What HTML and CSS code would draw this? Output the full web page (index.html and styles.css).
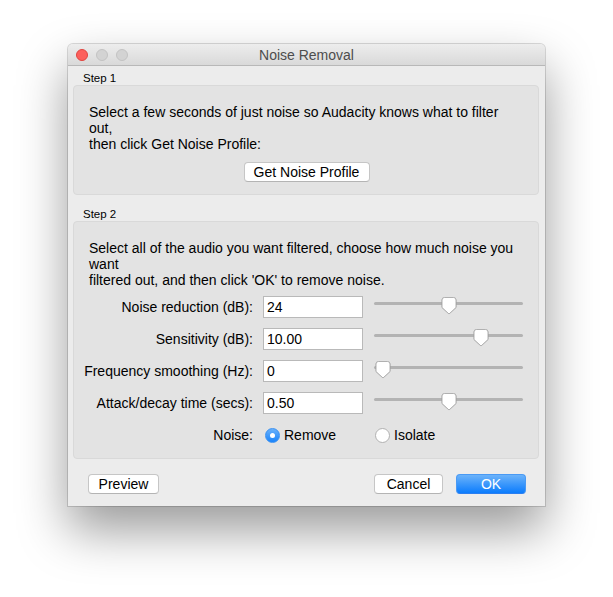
FILE: index.html
```html
<!DOCTYPE html>
<html lang="en">
  <head>
    <meta charset="UTF-8" />
    <title>Noise Removal</title>
    <link rel="stylesheet" href="styles.css">
  </head>
  <body>
    <div class="window" role="dialog" aria-label="Noise Removal">
      <div class="titlebar">
        <div class="lights">
          <span class="light close"></span>
          <span class="light"></span>
          <span class="light"></span>
        </div>
        <span class="title">Noise Removal</span>
      </div>

      <div class="content">
        <div class="step-label">Step 1</div>
        <section class="panel">
          <p class="info">
            Select a few seconds of just noise so Audacity knows what to filter<br>
            out,<br>
            then click Get Noise Profile:
          </p>
          <div class="center">
            <button class="btn profile-btn">Get Noise Profile</button>
          </div>
        </section>

        <div class="step-label step-two">Step 2</div>
        <section class="panel">
          <p class="info">
            Select all of the audio you want filtered, choose how much noise you<br>
            want<br>
            filtered out, and then click 'OK' to remove noise.
          </p>

          <div class="settings">
            <label class="field-label" for="reduction">Noise reduction (dB):</label>
            <input class="field" id="reduction" type="text" value="24">
            <div class="slider">
              <div class="track"></div>
              <div class="rail">
                <svg class="thumb" style="left: 50%" width="16" height="18" viewBox="0 0 16 18"><path d="M3.5 0.5H12.5Q15 0.5 15 3V10.5L8 17L1 10.5V3Q1 0.5 3.5 0.5Z"/></svg>
              </div>
            </div>

            <label class="field-label" for="sensitivity">Sensitivity (dB):</label>
            <input class="field" id="sensitivity" type="text" value="10.00">
            <div class="slider">
              <div class="track"></div>
              <div class="rail">
                <svg class="thumb" style="left: 75%" width="16" height="18" viewBox="0 0 16 18"><path d="M3.5 0.5H12.5Q15 0.5 15 3V10.5L8 17L1 10.5V3Q1 0.5 3.5 0.5Z"/></svg>
              </div>
            </div>

            <label class="field-label" for="smoothing">Frequency smoothing (Hz):</label>
            <input class="field" id="smoothing" type="text" value="0">
            <div class="slider">
              <div class="track"></div>
              <div class="rail">
                <svg class="thumb" style="left: 0%" width="16" height="18" viewBox="0 0 16 18"><path d="M3.5 0.5H12.5Q15 0.5 15 3V10.5L8 17L1 10.5V3Q1 0.5 3.5 0.5Z"/></svg>
              </div>
            </div>

            <label class="field-label" for="attack">Attack/decay time (secs):</label>
            <input class="field" id="attack" type="text" value="0.50">
            <div class="slider">
              <div class="track"></div>
              <div class="rail">
                <svg class="thumb" style="left: 50%" width="16" height="18" viewBox="0 0 16 18"><path d="M3.5 0.5H12.5Q15 0.5 15 3V10.5L8 17L1 10.5V3Q1 0.5 3.5 0.5Z"/></svg>
              </div>
            </div>

            <span class="field-label">Noise:</span>
            <label class="radio">
              <span class="radio-dot checked"></span>Remove
            </label>
            <label class="radio">
              <span class="radio-dot"></span>Isolate
            </label>
          </div>
        </section>

        <div class="footer">
          <button class="btn preview-btn">Preview</button>
          <div class="actions">
            <button class="btn cancel-btn">Cancel</button>
            <button class="btn default">OK</button>
          </div>
        </div>
      </div>
    </div>
  </body>
</html>
```

FILE: styles.css
```css
* {
  margin: 0;
  padding: 0;
  box-sizing: border-box;
}

html,
body {
  height: 100%;
}

body {
  background: #ffffff;
  font-family: "Liberation Sans", Arial, sans-serif;
  font-size: 14px;
  color: #000000;
  overflow: hidden;
}

.window {
  width: 477px;
  margin: 44px 0 0 68px;
  background: #ececec;
  border-radius: 5px 5px 0 0;
  box-shadow: 0 0 0 1px rgba(0, 0, 0, 0.14), 0 24px 50px rgba(0, 0, 0, 0.4);
}

/* title bar */
.titlebar {
  position: relative;
  height: 22px;
  display: flex;
  align-items: center;
  justify-content: center;
  background: linear-gradient(#ededed, #d9d9d9);
  border-bottom: 1px solid #b8b8b8;
  border-radius: 5px 5px 0 0;
}

.lights {
  position: absolute;
  left: 8px;
  top: 5px;
  display: flex;
  gap: 8px;
}

.light {
  width: 12px;
  height: 12px;
  border-radius: 50%;
  background: #d3d3d3;
  border: 1px solid #c3c3c3;
}

.light.close {
  background: #fc605c;
  border-color: #e1443f;
}

.title {
  color: #4d4d4d;
  font-size: 14px;
}

/* content */
.step-label {
  font-size: 11.5px;
  line-height: 14px;
  padding: 5px 0 0 15px;
  height: 19px;
}

.step-label.step-two {
  margin-top: 12px;
  padding-top: 0;
  height: 14px;
}

.panel {
  margin: 0 6px 0 5px;
  padding: 18px 14px 12px 15px;
  background: #e3e3e3;
  border: 1px solid #d9d9d9;
  border-radius: 4px;
}

.info {
  line-height: 16px;
}

.center {
  display: flex;
  justify-content: center;
  margin-top: 10px;
}

/* buttons */
.btn {
  height: 20px;
  padding: 0;
  white-space: nowrap;
  font-family: inherit;
  font-size: 14px;
  line-height: 18px;
  color: #000000;
  background: #ffffff;
  border: 1px solid #c6c6c6;
  border-bottom-color: #b4b4b4;
  border-radius: 4px;
}

.profile-btn {
  width: 126px;
}

.preview-btn {
  width: 71px;
}

.cancel-btn {
  width: 69px;
}

.btn.default {
  width: 70px;
  color: #ffffff;
  background: linear-gradient(#6cb3fa, #0b7cfd);
  border-color: #4a9af4;
  border-bottom-color: #2a7ef0;
}

/* settings grid */
.settings {
  display: grid;
  grid-template-columns: 164px 100px 150px;
  grid-auto-rows: 22px;
  column-gap: 10px;
  row-gap: 10px;
  margin-top: 8px;
  align-items: center;
}

.field-label {
  display: flex;
  justify-content: flex-end;
  white-space: nowrap;
}

.field {
  height: 22px;
  width: 100px;
  padding: 0 3px;
  font-family: inherit;
  font-size: 14px;
  border: 1px solid #b9b9b9;
  background: #ffffff;
}

.slider {
  position: relative;
  height: 22px;
  margin-left: 1px;
}

.track {
  position: absolute;
  left: 0;
  right: 0;
  top: 6px;
  height: 3px;
  border-radius: 2px;
  background: #b3b3b3;
}

/* the thumb travels across the track minus its own width */
.rail {
  position: absolute;
  left: 1px;
  right: 17px;
  top: 1px;
  height: 18px;
}

.thumb {
  position: absolute;
  top: 0;
  filter: drop-shadow(0 0.5px 0.5px rgba(0, 0, 0, 0.2));
}

.thumb path {
  fill: #ffffff;
  stroke: #b0b0b0;
  stroke-width: 1;
}

.radio {
  display: flex;
  align-items: center;
  gap: 4px;
}

.radio-dot {
  width: 15px;
  height: 15px;
  margin-left: 2px;
  border-radius: 50%;
  background: #ffffff;
  border: 1px solid #b1b1b1;
  display: flex;
  align-items: center;
  justify-content: center;
}

.radio-dot.checked {
  background: linear-gradient(#68b0fa, #1a84fb);
  border-color: #3a91f2;
}

.radio-dot.checked::after {
  content: "";
  width: 5px;
  height: 5px;
  border-radius: 50%;
  background: #ffffff;
}

/* footer */
.footer {
  display: flex;
  justify-content: space-between;
  padding: 15px 19px 12px 20px;
}

.actions {
  display: flex;
  gap: 13px;
}
```
